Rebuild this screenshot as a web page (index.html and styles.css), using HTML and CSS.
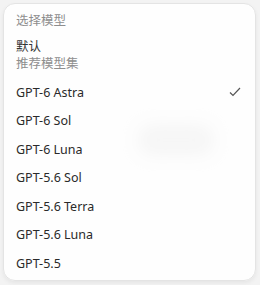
FILE: index.html
```html
<!DOCTYPE html>
<html>
<head>
<meta charset="utf-8">
<link rel="stylesheet" href="styles.css">
</head>
<body>
<div class="page">
  <div class="blob"></div>
  <div class="menu">
    <div class="menu-title">选择模型</div>
    <div class="group">
      <div class="group-name">默认</div>
      <div class="group-sub">推荐模型集</div>
    </div>
    <div class="item selected"><span>GPT-6 Astra</span>
      <svg class="check" width="12" height="10" viewBox="0 0 12 10"><path d="M1 5.5 L4 8.5 L11 1" fill="none" stroke="#555" stroke-width="1.2"/></svg>
    </div>
    <div class="item"><span>GPT-6 Sol</span></div>
    <div class="item"><span>GPT-6 Luna</span></div>
    <div class="item"><span>GPT-5.6 Sol</span></div>
    <div class="item"><span>GPT-5.6 Terra</span></div>
    <div class="item"><span>GPT-5.6 Luna</span></div>
    <div class="item"><span>GPT-5.5</span></div>
  </div>
</div>
</body>
</html>
```
FILE: styles.css
```css
html, body {
  margin: 0;
  padding: 0;
  background: #f3f3f3;
}
.page {
  position: relative;
  width: 260px;
  height: 285px;
  padding: 3px 4px 4px 3px;
  box-sizing: border-box;
}
.blob {
  position: absolute;
  left: 138px;
  top: 124px;
  width: 76px;
  height: 32px;
  background: #c4c4c4;
  border-radius: 16px;
  filter: blur(7px);
}
.menu {
  position: relative;
  height: 278px;
  box-sizing: border-box;
  background: rgba(255,255,255,0.85);
  border: 1px solid #e4e4e4;
  border-radius: 12px;
  box-shadow: 0 2px 4px rgba(0,0,0,0.06);
  font-family: "Noto Sans", "Noto Sans CJK SC", sans-serif;
  font-size: 12.5px;
  color: #2a2a2a;
  padding: 5px 0 0 0;
}
.menu-title {
  color: #8e8e8e;
  padding: 0 12px;
  height: 24px;
  line-height: 24px;
}
.group {
  padding: 5px 12px 0;
  height: 40px;
}
.group-name {
  line-height: 18px;
  color: #333;
}
.group-sub {
  color: #8e8e8e;
  line-height: 16px;
}
.item {
  display: flex;
  align-items: center;
  justify-content: space-between;
  height: 28.5px;
  padding: 0 14px 0 12px;
}
.check {
  display: block;
}
```
